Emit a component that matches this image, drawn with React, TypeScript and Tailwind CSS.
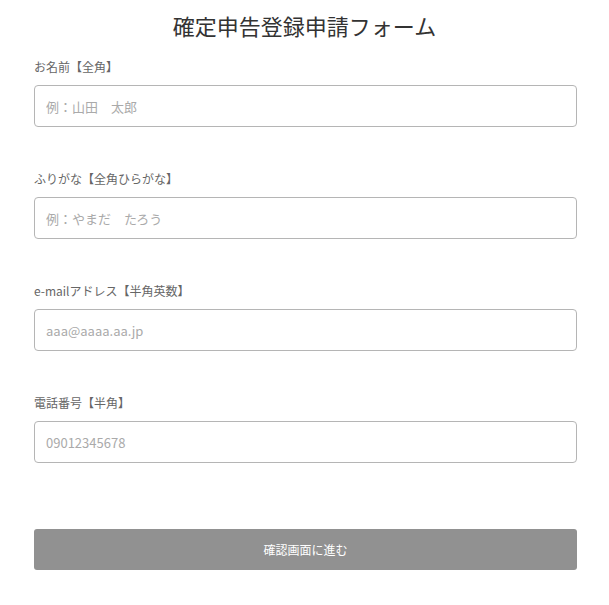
const fields = [
  { label: 'お名前【全角】', placeholder: '例：山田　太郎', type: 'text' },
  { label: 'ふりがな【全角ひらがな】', placeholder: '例：やまだ　たろう', type: 'text' },
  { label: 'e-mailアドレス【半角英数】', placeholder: 'aaa@aaaa.aa.jp', type: 'email' },
  { label: '電話番号【半角】', placeholder: '09012345678', type: 'tel' },
];

export default function App() {
  return (
    <div
      className="min-h-[605px] w-[609px] bg-white"
      style={{ fontFamily: '"Noto Sans CJK JP", "Noto Sans", sans-serif' }}
    >
      <h1 className="h-[50px] text-center text-[22px] leading-[50px] font-normal text-[#333]">
        確定申告登録申請フォーム
      </h1>
      <form className="ml-[34px] w-[543px] pt-[8px]" onSubmit={(e) => e.preventDefault()}>
        {fields.map((f) => (
          <div key={f.label} className="mb-[43px]">
            <label className="mb-[9px] block text-[12px] leading-[18px] text-[#666]">{f.label}</label>
            <input
              type={f.type}
              placeholder={f.placeholder}
              className="block h-[42px] w-full rounded-[4px] border border-[#b5b5b5] px-[11px] text-[13px] text-[#333] outline-none placeholder:text-[#aaa]"
            />
          </div>
        ))}
        <button
          type="submit"
          className="mt-[66px] block h-[41px] w-full rounded-[3px] bg-[#919191] text-[12px] text-white"
        >
          確認画面に進む
        </button>
      </form>
    </div>
  );
}
